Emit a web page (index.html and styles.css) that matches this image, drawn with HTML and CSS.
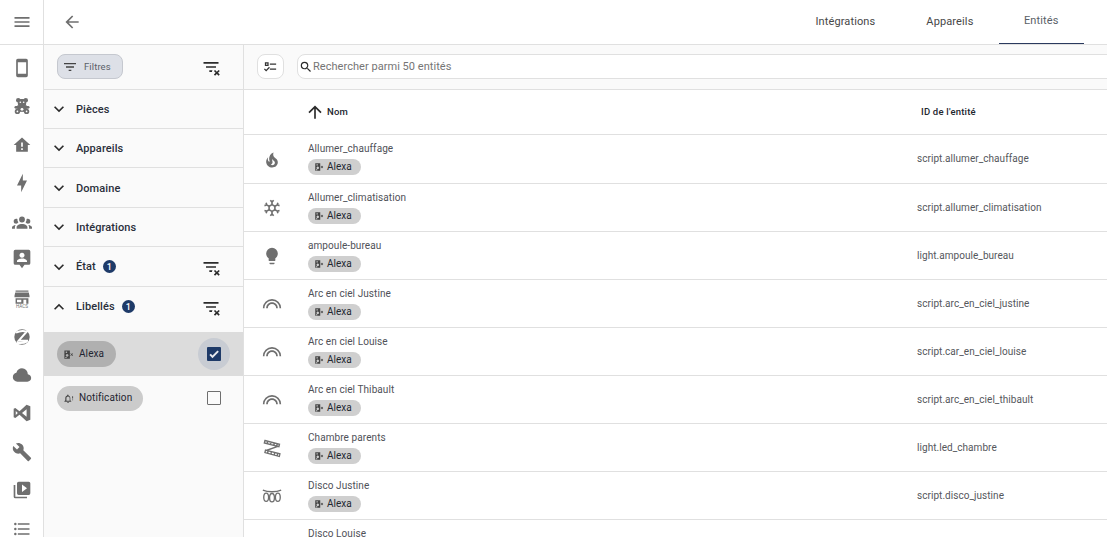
FILE: index.html
```html
<!DOCTYPE html>
<html lang="fr">
<head>
<meta charset="utf-8">
<title>Entités</title>
<link rel="stylesheet" href="styles.css">
</head>
<body>
<svg class="defs" width="0" height="0" aria-hidden="true">
  <defs>
    <symbol id="alexa" viewBox="0 0 24 24"><path fill-rule="evenodd" d="M3 3h12v18H3zM6 5.500v3h3v-3zM9 11a3 3 0 1 0 .01 0zM5 17.500h3v2H5z"/><path d="M17 9l2 2 2-2 1 1-2 2 2 2-1 1-2-2-2 2-1-1 2-2-2-2z"/></symbol>
    <symbol id="bell" viewBox="0 0 24 24"><path d="M11 3a2 2 0 0 0-2 2v.6C6.400 6.500 5 8.800 5 11.500V16l-2 2v1h15v-1l-2-2v-4.500c0-2.700-1.400-5-4-5.900V5a2 2 0 0 0-1-2zm0 4.500c2.200 0 3.500 1.800 3.500 4V17h-7v-5.500c0-2.200 1.300-4 3.500-4zM9 20h4a2 2 0 0 1-4 0z"/><path d="M20 7h2v5h-2zM20 14h2v2h-2z"/></symbol>
    <symbol id="filter-x" viewBox="0 0 24 24"><path d="M21 8H3V6H21V8M13.810 16H10V18H13.090C13.210 17.280 13.460 16.610 13.810 16M18 11H6V13H18V11M21.120 15.460L19 17.590L16.880 15.460L15.470 16.880L17.590 19L15.470 21.120L16.880 22.540L19 20.410L21.120 22.540L22.540 21.120L20.410 19L22.540 16.880L21.120 15.460Z"/></symbol>
    <symbol id="chev-down" viewBox="0 0 24 24"><path d="M7.410,8.580L12,13.170L16.590,8.580L18,10L12,16L6,10L7.410,8.580Z"/></symbol>
    <symbol id="looks" viewBox="0 0 24 24"><path d="M12,6A11,11 0 0,0 1,17H3C3,12.040 7.040,8 12,8C16.960,8 21,12.040 21,17H23A11,11 0 0,0 12,6M12,10C8.140,10 5,13.140 5,17H7A5,5 0 0,1 12,12A5,5 0 0,1 17,17H19C19,13.140 15.860,10 12,10Z"/></symbol>
  </defs>
</svg>
<div class="app">
  <nav class="rail">
    <div class="rail-head">
      <svg class="rail-icon" viewBox="0 0 24 24"><path d="M3,6H21V8H3V6M3,11H21V13H3V11M3,16H21V18H3V16Z"/></svg>
    </div>
    <ul class="rail-list">
      <li class="rail-item"><svg class="rail-icon" viewBox="0 0 24 24"><path d="M17,19H7V5H17M17,1H7C5.890,1 5,1.890 5,3V21A2,2 0 0,0 7,23H17A2,2 0 0,0 19,21V3C19,1.890 18.100,1 17,1Z"/></svg></li>
      <li class="rail-item rail-up"><svg class="rail-icon" viewBox="0 0 24 24"><circle cx="7.500" cy="5" r="2.700"/><circle cx="16.500" cy="5" r="2.700"/><rect x="7" y="3.500" width="10" height="9" rx="3.500"/><rect x="3" y="12" width="18" height="3.200" rx="1.600"/><rect x="6.500" y="11" width="11" height="8"/><circle cx="6.500" cy="18.500" r="3.200"/><circle cx="17.500" cy="18.500" r="3.200"/><circle class="cut" cx="10" cy="7.500" r="1"/><circle class="cut" cx="14" cy="7.500" r="1"/><circle class="cut" cx="12" cy="16" r="1.700"/><circle class="cut" cx="6.500" cy="18.500" r="1"/><circle class="cut" cx="17.500" cy="18.500" r="1"/></svg></li>
      <li class="rail-item"><svg class="rail-icon" viewBox="0 0 24 24"><path d="M12,3L2,12H5V20H19V12H22L12,3ZM13,18H11V16H13V18M13,14H11V9H13V14" fill-rule="evenodd"/></svg></li>
      <li class="rail-item"><svg class="rail-icon" viewBox="0 0 24 24"><path d="M11 15H6L13 1V9H18L11 23V15Z"/></svg></li>
      <li class="rail-item"><svg class="rail-icon" viewBox="0 0 24 24"><path d="M12,5.500A3.500,3.500 0 0,1 15.500,9A3.500,3.500 0 0,1 12,12.500A3.500,3.500 0 0,1 8.500,9A3.500,3.500 0 0,1 12,5.500M5,8C5.560,8 6.080,8.150 6.530,8.420C6.380,9.850 6.800,11.270 7.660,12.380C7.160,13.340 6.160,14 5,14A3,3 0 0,1 2,11A3,3 0 0,1 5,8M19,8A3,3 0 0,1 22,11A3,3 0 0,1 19,14C17.840,14 16.840,13.340 16.340,12.380C17.200,11.270 17.620,9.850 17.470,8.420C17.920,8.150 18.440,8 19,8M5.500,18.250C5.500,16.180 8.410,14.500 12,14.500C15.590,14.500 18.500,16.180 18.500,18.250V20H5.500V18.250M0,20V18.500C0,17.110 1.890,15.940 4.450,15.600C3.860,16.280 3.500,17.220 3.500,18.250V20H0M24,20H20.500V18.250C20.500,17.220 20.140,16.280 19.550,15.600C22.110,15.940 24,17.110 24,18.500V20Z"/></svg></li>
      <li class="rail-item rail-up"><svg class="rail-icon" viewBox="0 0 24 24"><path fill-rule="evenodd" d="M4 1h16a2 2 0 0 1 2 2v14a2 2 0 0 1-2 2h-5l-3 4-3-4H4a2 2 0 0 1-2-2V3a2 2 0 0 1 2-2zM12 4.500a3 3 0 1 0 .01 0zM6 15.500h12v-1.200c0-2-4-3-6-3s-6 1-6 3z"/></svg></li>
      <li class="rail-item"><svg class="rail-icon" viewBox="-2 -2 28 28"><path d="M3 0h18v2H3zM2.500 3h19l1 4.500v2h-21v-2z"/><path fill-rule="evenodd" d="M3 11h18v7.500H3zM5 13v3.500h6V13zM14 13v5.500h4V13z"/><text class="hacs" x="12" y="25" text-anchor="middle">HACS</text></svg></li>
      <li class="rail-item"><svg class="rail-icon" viewBox="-3 -3 30 30"><circle cx="12" cy="12" r="11.500"/><path class="z-cut" d="M3 5.500c5-2.500 11-3 16-1.500L7 17.500h14M4 20.500c5 1 11 .8 16-2"/></svg></li>
      <li class="rail-item"><svg class="rail-icon" viewBox="0 0 24 24"><path d="M6.500 20Q4.220 20 2.610 18.430 1 16.850 1 14.580 1 12.630 2.170 11.100 3.350 9.570 5.250 9.150 5.880 6.850 7.750 5.430 9.630 4 12 4 14.930 4 16.960 6.040 19 8.070 19 11 20.730 11.200 21.860 12.500 23 13.780 23 15.500 23 17.380 21.690 18.690 20.380 20 18.500 20Z"/></svg></li>
      <li class="rail-item rail-up"><svg class="rail-icon" viewBox="0 0 24 24"><path fill-rule="evenodd" d="M17.500 2L22 4V20L17.500 22L9 14L4 18L2 17V7L4 6L9 10ZM17.500 7.500L12 12L17.500 16.500ZM4.500 9.500V14.500L7 12Z"/></svg></li>
      <li class="rail-item"><svg class="rail-icon" viewBox="0 0 24 24"><path d="M22.700,19L13.600,9.900C14.500,7.600 14,4.900 12.100,3C10.100,1 7.100,0.600 4.700,1.700L9,6L6,9L1.600,4.700C0.400,7.100 0.900,10.100 2.900,12.100C4.800,14 7.500,14.500 9.800,13.600L18.900,22.700C19.300,23.100 19.900,23.100 20.300,22.700L22.600,20.400C23.100,20 23.100,19.300 22.700,19Z"/></svg></li>
      <li class="rail-item"><svg class="rail-icon" viewBox="0 0 24 24"><path fill-rule="evenodd" d="M4,6H2V20A2,2 0 0,0 4,22H18V20H4V6M20,2H8A2,2 0 0,0 6,4V16A2,2 0 0,0 8,18H20A2,2 0 0,0 22,16V4A2,2 0 0,0 20,2M12,14.500V5.500L18,10L12,14.500Z"/></svg></li>
      <li class="rail-item"><svg class="rail-icon" viewBox="0 0 24 24"><path d="M7,5H21V7H7V5M7,13V11H21V13H7M4,4.500A1.500,1.500 0 0,1 5.500,6A1.500,1.500 0 0,1 4,7.500A1.500,1.500 0 0,1 2.500,6A1.500,1.500 0 0,1 4,4.500M4,10.500A1.500,1.500 0 0,1 5.500,12A1.500,1.500 0 0,1 4,13.500A1.500,1.500 0 0,1 2.500,12A1.500,1.500 0 0,1 4,10.500M7,19V17H21V19H7M4,16.500A1.500,1.500 0 0,1 5.500,18A1.500,1.500 0 0,1 4,19.500A1.500,1.500 0 0,1 2.500,18A1.500,1.500 0 0,1 4,16.500Z"/></svg></li>
    </ul>
  </nav>

  <div class="main">
    <header class="topbar">
      <svg class="back" viewBox="0 0 24 24"><path d="M20,11V13H8L13.500,18.500L12.080,19.920L4.160,12L12.080,4.080L13.500,5.500L8,11H20Z"/></svg>
      <div class="tabs">
        <a class="tab tab-first">Intégrations</a>
        <a class="tab">Appareils</a>
        <a class="tab tab-active">Entités</a>
      </div>
    </header>

    <div class="content">
      <aside class="filters">
        <div class="filters-head">
          <button class="filter-btn"><svg viewBox="0 0 24 24"><path d="M6,13H18V11H6M3,6V8H21V6M10,18H14V16H10V18Z"/></svg>Filtres</button>
          <svg class="clear"><use href="#filter-x"/></svg>
        </div>
        <div class="pane"><svg class="chev"><use href="#chev-down"/></svg><span>Pièces</span></div>
        <div class="pane"><svg class="chev"><use href="#chev-down"/></svg><span>Appareils</span></div>
        <div class="pane pane-tall pane-low"><svg class="chev"><use href="#chev-down"/></svg><span>Domaine</span></div>
        <div class="pane"><svg class="chev"><use href="#chev-down"/></svg><span>Intégrations</span></div>
        <div class="pane pane-tall"><svg class="chev"><use href="#chev-down"/></svg><span>État</span><b class="badge">1</b><svg class="clear clear-end"><use href="#filter-x"/></svg></div>
        <div class="pane pane-open"><svg class="chev chev-up"><use href="#chev-down"/></svg><span>Libellés</span><b class="badge">1</b><svg class="clear clear-end"><use href="#filter-x"/></svg></div>
        <div class="opt opt-on">
          <span class="opt-chip opt-chip-on"><svg><use href="#alexa"/></svg>Alexa</span>
          <span class="halo"><span class="check"><svg viewBox="0 0 24 24"><path d="M9,20.420L2.790,14.210L5.620,11.380L9,14.770L18.880,4.880L21.710,7.710L9,20.420Z"/></svg></span></span>
        </div>
        <div class="opt">
          <span class="opt-chip opt-chip-wide"><svg><use href="#bell"/></svg>Notification</span>
          <span class="halo"><span class="box"></span></span>
        </div>
      </aside>

      <section class="table">
        <div class="toolbar">
          <button class="sel-btn"><svg viewBox="0 0 24 24"><path d="M3,5H9V11H3V5M5,7V9H7V7H5M11,7H21V9H11V7M11,15H21V17H11V15M5,20L1.500,16.500L2.910,15.090L5,17.170L9.590,12.590L11,14L5,20Z"/></svg></button>
          <div class="search"><svg viewBox="0 0 24 24"><path d="M9.500,3A6.500,6.500 0 0,1 16,9.500C16,11.110 15.410,12.590 14.440,13.730L14.710,14H15.500L20.500,19L19,20.500L14,15.500V14.710L13.730,14.440C12.590,15.410 11.110,16 9.500,16A6.500,6.500 0 0,1 3,9.500A6.500,6.500 0 0,1 9.500,3M9.500,5C7,5 5,7 5,9.500C5,12 7,14 9.500,14C12,14 14,12 14,9.500C14,7 12,5 9.500,5Z"/></svg>Rechercher parmi 50 entités</div>
        </div>
        <div class="row row-head">
          <span></span>
          <span class="th-name"><svg viewBox="0 0 24 24"><path d="M13,20H11V8L5.500,13.500L4.080,12.080L12,4.160L19.920,12.080L18.500,13.500L13,8V20Z"/></svg>Nom</span>
          <span class="th-id">ID de l'entité</span>
        </div>
        <div class="row row-first">
          <svg class="r-icon" viewBox="0 0 24 24"><path d="M17.660 11.200C17.430 10.900 17.150 10.640 16.890 10.380C16.220 9.780 15.460 9.350 14.820 8.720C13.330 7.260 13 4.850 13.950 3C13 3.230 12.170 3.750 11.460 4.320C8.870 6.400 7.850 10.070 9.070 13.220C9.110 13.320 9.150 13.420 9.150 13.550C9.150 13.770 9 13.970 8.800 14.050C8.570 14.150 8.330 14.090 8.140 13.930C8.080 13.880 8.040 13.830 8 13.760C6.870 12.330 6.690 10.280 7.450 8.640C5.780 10 4.870 12.300 5 14.470C5.060 14.970 5.120 15.470 5.290 15.970C5.430 16.570 5.700 17.170 6 17.700C7.080 19.430 8.950 20.670 10.960 20.920C13.100 21.190 15.390 20.800 17.030 19.320C18.860 17.660 19.500 15 18.560 12.720L18.430 12.460C18.220 12 17.660 11.200 17.660 11.200M14.500 17.500C14.220 17.740 13.760 18 13.400 18.100C12.280 18.500 11.160 17.940 10.500 17.280C11.690 17 12.400 16.120 12.610 15.230C12.780 14.430 12.460 13.770 12.330 13C12.210 12.260 12.230 11.630 12.500 10.940C12.690 11.320 12.890 11.700 13.130 12C13.900 13 15.110 13.440 15.370 14.800C15.410 14.940 15.430 15.080 15.430 15.230C15.460 16.050 15.100 16.950 14.500 17.500H14.500Z"/></svg>
          <div class="cell"><div class="name">Allumer_chauffage</div><span class="chip"><svg><use href="#alexa"/></svg>Alexa</span></div>
          <div class="eid">script.allumer_chauffage</div>
        </div>
        <div class="row">
          <svg class="r-icon" viewBox="0 0 24 24"><path d="M20.790,13.950L18.460,14.570L16.460,13.440V10.560L18.460,9.430L20.790,10.050L21.310,8.120L19.540,7.650L20,5.880L18.070,5.360L17.450,7.690L15.450,8.820L13,7.380V5.120L14.710,3.410L13.290,2L12,3.290L10.710,2L9.290,3.410L11,5.120V7.380L8.500,8.820L6.500,7.690L5.920,5.360L4,5.880L4.470,7.650L2.700,8.120L3.220,10.050L5.550,9.430L7.550,10.560V13.450L5.550,14.580L3.220,13.960L2.700,15.890L4.470,16.360L4,18.120L5.930,18.640L6.550,16.310L8.550,15.180L11,16.620V18.880L9.290,20.590L10.710,22L12,20.710L13.290,22L14.700,20.590L13,18.880V16.620L15.500,15.170L17.500,16.300L18.120,18.630L20,18.120L19.530,16.350L21.300,15.880L20.790,13.950M9.500,10.560L12,9.110L14.500,10.560V13.440L12,14.890L9.500,13.440V10.560Z"/></svg>
          <div class="cell"><div class="name">Allumer_climatisation</div><span class="chip"><svg><use href="#alexa"/></svg>Alexa</span></div>
          <div class="eid">script.allumer_climatisation</div>
        </div>
        <div class="row">
          <svg class="r-icon" viewBox="0 0 24 24"><path d="M12,2A7,7 0 0,0 5,9C5,11.380 6.190,13.470 8,14.740V17A1,1 0 0,0 9,18H15A1,1 0 0,0 16,17V14.740C17.810,13.470 19,11.380 19,9A7,7 0 0,0 12,2M9,21A1,1 0 0,0 10,22H14A1,1 0 0,0 15,21V20H9V21Z"/></svg>
          <div class="cell"><div class="name">ampoule-bureau</div><span class="chip"><svg><use href="#alexa"/></svg>Alexa</span></div>
          <div class="eid">light.ampoule_bureau</div>
        </div>
        <div class="row">
          <svg class="r-icon"><use href="#looks"/></svg>
          <div class="cell"><div class="name">Arc en ciel Justine</div><span class="chip"><svg><use href="#alexa"/></svg>Alexa</span></div>
          <div class="eid">script.arc_en_ciel_justine</div>
        </div>
        <div class="row">
          <svg class="r-icon"><use href="#looks"/></svg>
          <div class="cell"><div class="name">Arc en ciel Louise</div><span class="chip"><svg><use href="#alexa"/></svg>Alexa</span></div>
          <div class="eid">script.car_en_ciel_louise</div>
        </div>
        <div class="row">
          <svg class="r-icon"><use href="#looks"/></svg>
          <div class="cell"><div class="name">Arc en ciel Thibault</div><span class="chip"><svg><use href="#alexa"/></svg>Alexa</span></div>
          <div class="eid">script.arc_en_ciel_thibault</div>
        </div>
        <div class="row">
          <svg class="r-icon r-line" viewBox="0 0 24 24"><path d="M3.500 3L21 7.500 20.300 10.500 2.800 6zM4.200 14.500L21.500 19 20.800 22 3.500 17.500zM19 10L5 15M6.500 4v3M10.500 5v3M14.500 6v3M18 7v3M7 15.500v3M11 16.500v3M15 17.500v3M18.500 18.500v3"/></svg>
          <div class="cell"><div class="name">Chambre parents</div><span class="chip"><svg><use href="#alexa"/></svg>Alexa</span></div>
          <div class="eid">light.led_chambre</div>
        </div>
        <div class="row">
          <svg class="r-icon r-line" viewBox="0 0 24 24"><path d="M1 5c6 2.500 16 2.500 22 0"/><ellipse cx="5" cy="13.500" rx="2.900" ry="5"/><ellipse cx="12" cy="14" rx="2.900" ry="5"/><ellipse cx="19" cy="13.500" rx="2.900" ry="5"/></svg>
          <div class="cell"><div class="name">Disco Justine</div><span class="chip"><svg><use href="#alexa"/></svg>Alexa</span></div>
          <div class="eid">script.disco_justine</div>
        </div>
        <div class="row">
          <span></span>
          <div class="cell"><div class="name">Disco Louise</div></div>
          <div class="eid"></div>
        </div>
      </section>
    </div>
  </div>
</div>
</body>
</html>
```
FILE: styles.css
```css
* { box-sizing: border-box; }
html, body { margin: 0; height: 537px; overflow: hidden; background: #fff; }
body { font-family: Roboto, "Liberation Sans", sans-serif; font-size: 11px; color: #212121; }
.defs { position: absolute; }
svg { display: block; fill: currentColor; }
ul { list-style: none; margin: 0; padding: 0; }
button { font: inherit; margin: 0; padding: 0; }

.app { display: flex; height: 537px; }

.rail { width: 44px; flex: none; border-right: 1px solid #e0e0e0; color: #6f6f6f; }
.rail-head { height: 45px; border-bottom: 1px solid #e0e0e0; display: flex; align-items: center; justify-content: center; padding-bottom: 1px; }
.rail-icon { width: 20px; height: 20px; overflow: visible; }
.rail-list { padding-top: 4px; }
.rail-item { height: 38.4px; display: flex; align-items: center; justify-content: center; }
.rail-up { padding-bottom: 2px; }
.cut { fill: #fff; }
.hacs { font-size: 6.500px; font-family: Roboto, sans-serif; }
.z-cut { fill: none; stroke: #fff; stroke-width: 3; }

.main { flex: 1; min-width: 0; display: flex; flex-direction: column; overflow: hidden; }

.topbar { height: 45px; flex: none; display: flex; align-items: stretch; justify-content: space-between; border-bottom: 1px solid #e0e0e0; padding: 0 23px 0 18px; }
.back { width: 20px; height: 20px; color: #6f6f6f; margin-top: 12px; }
.tabs { display: flex; }
.tab { padding: 15px 25.5px 0; font-size: 11px; letter-spacing: 0.12px; color: #474747; font-weight: 400; height: 44px; }
.tab-active { padding-top: 14px; padding-left: 25px; padding-right: 25.5px; border-bottom: 1px solid #2b3a5e; color: #5a5f68; }

.content { flex: 1; display: flex; min-height: 0; }

.filters { width: 200px; flex: none; background: #fafafa; border-right: 1px solid #e0e0e0; }
.filters-head { height: 45px; border-bottom: 1px solid #e0e0e0; display: flex; align-items: center; justify-content: space-between; padding: 0 22px 1px 13px; }
.filter-btn { width: 66px; height: 25px; display: flex; align-items: center; gap: 6px; padding-left: 4px; font-size: 9.500px; color: #5b5f67; letter-spacing: 0.1px; background: #dde0e7; border: 1px solid #c5c8cf; border-radius: 8px; }
.filter-btn svg { width: 16px; height: 16px; color: #444; }
.clear { width: 20px; height: 20px; color: #2b2b2b; flex: none; }
.clear-end { margin-left: auto; margin-right: 22px; margin-top: 1px; }

.pane { height: 39px; padding-left: 5px; border-bottom: 1px solid #e0e0e0; display: flex; align-items: center; font-size: 11px; font-weight: 500; letter-spacing: 0.1px; color: #2a2f3a; }
.pane-tall { height: 40px; }
.pane-low { padding-top: 1px; }
.pane-open { height: 45px; border-bottom: 0; padding-bottom: 6px; }
.chev { width: 20px; height: 20px; flex: none; margin-right: 7px; color: #2b2b2b; }
.chev-up { transform: scaleY(-1); }
.badge { width: 13px; height: 13px; margin-left: 7px; border-radius: 50%; background: #1e3a68; color: #fff; font-size: 9px; font-weight: 500; display: flex; align-items: center; justify-content: center; }

.opt { height: 44px; display: flex; align-items: center; justify-content: space-between; padding: 0 13px; }
.opt-on { background: #dcdcdc; }
.opt-chip { height: 25px; display: flex; align-items: center; gap: 5px; padding: 0 0 2px 6px; border-radius: 13px; background: #cbcbcb; font-size: 10px; font-weight: 400; color: #1f2430; letter-spacing: 0.1px; }
.opt-chip svg { width: 11px; height: 11px; flex: none; color: #444; margin-top: 3px; }
.opt-chip-on { width: 59px; height: 26px; background: #b0b0b0; }
.opt-chip-wide { width: 86px; }
.halo { width: 32px; height: 32px; border-radius: 50%; display: flex; align-items: center; justify-content: center; }
.opt-on .halo { background: #c8ccd3; }
.check { width: 14px; height: 14px; border-radius: 1px; background: #1e3a68; color: #e8eaee; display: flex; align-items: center; justify-content: center; }
.check svg { width: 12px; height: 12px; }
.box { width: 14px; height: 14px; border: 1px solid #6e6e6e; border-radius: 1px; }

.table { flex: 1; min-width: 0; }
.toolbar { height: 45px; background: #fafafa; border-bottom: 1px solid #e0e0e0; display: flex; align-items: center; gap: 13px; padding: 0 0 1px 13px; }
.sel-btn { width: 27px; height: 25px; flex: none; background: #fff; border: 1px solid #e0e0e0; border-radius: 8px; display: flex; align-items: center; justify-content: center; color: #333; }
.sel-btn svg { width: 15px; height: 15px; }
.search { flex: 1; height: 25px; margin-right: -14px; background: #fff; border: 1px solid #e0e0e0; border-radius: 8px; display: flex; align-items: center; padding-left: 1px; color: #757575; font-size: 11px; letter-spacing: 0.04px; }
.search svg { width: 14px; height: 14px; color: #2b2b2b; }

.row { height: 48px; display: grid; grid-template-columns: 64px 609px 1fr; border-bottom: 1px solid #e0e0e0; align-items: center; }
.row-first { height: 49px; }
.row-first .eid { margin-bottom: 1px; }
.row-head { height: 45px; padding-bottom: 1px; }
.th-name { display: flex; align-items: center; gap: 2.5px; margin-left: -3.5px; font-size: 9.500px; font-weight: 500; color: #23272f; letter-spacing: 0.2px; }
.th-name svg { width: 20px; height: 20px; color: #2b2b2b; }
.th-id { padding-left: 4px; font-size: 9.500px; font-weight: 500; color: #23272f; letter-spacing: 0.2px; }
.r-icon { width: 20px; height: 20px; color: #6f6f6f; margin-left: 18px; margin-top: 1px; }
.r-line { fill: none; stroke: #6f6f6f; stroke-width: 1.600; }
.cell { align-self: start; padding-top: 7px; }
.name { font-size: 10px; line-height: 13px; letter-spacing: 0.08px; color: #4f5158; }
.chip { width: 53px; height: 16px; margin-top: 4px; display: flex; align-items: center; gap: 3px; padding: 0 0 1px 6px; border-radius: 8px; background: #cfcfcf; font-size: 10px; font-weight: 400; color: #23272f; }
.chip svg { width: 10px; height: 10px; color: #444; flex: none; }
.eid { font-size: 10px; letter-spacing: 0.05px; color: #55575c; }
```
